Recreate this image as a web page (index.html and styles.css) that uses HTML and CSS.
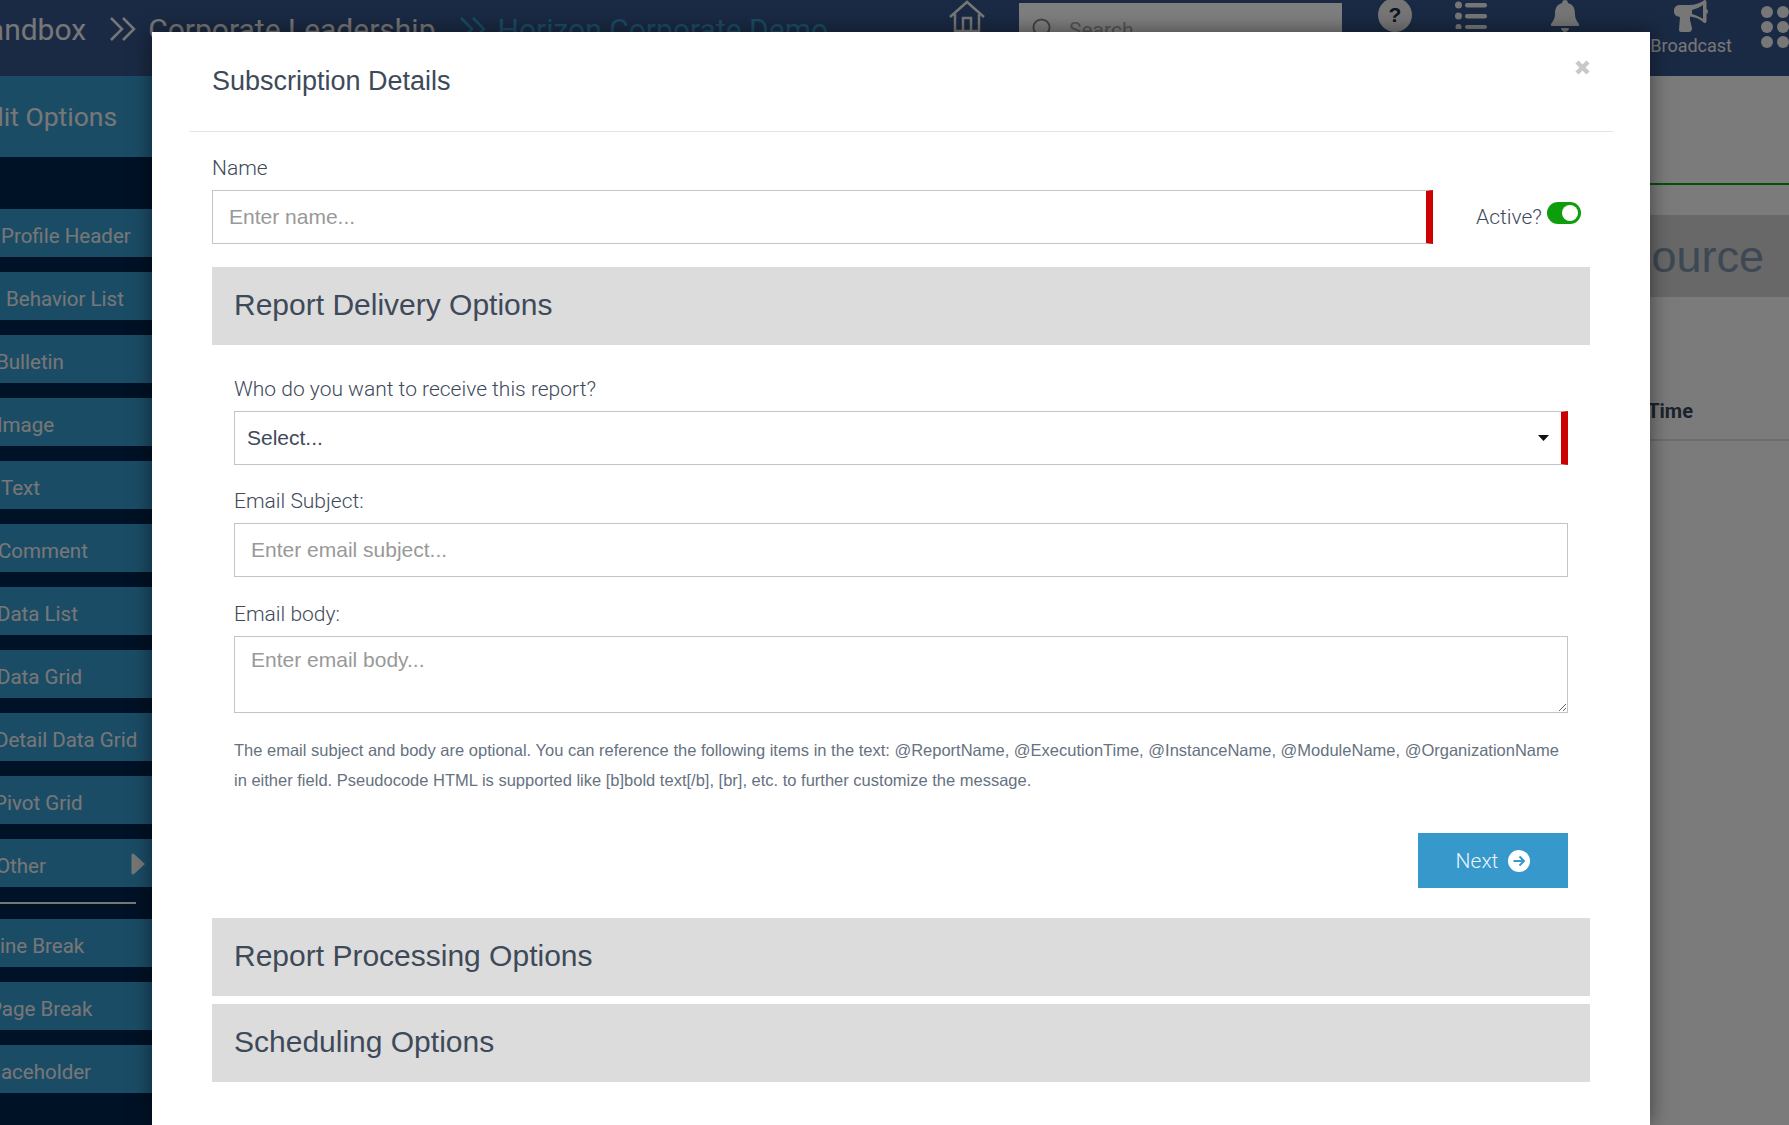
FILE: index.html
```html
<!DOCTYPE html>
<html lang="en">
<head>
<meta charset="utf-8">
<title>Subscription Details</title>
<link rel="stylesheet" href="styles.css">
</head>
<body>
<div class="page">
  <header class="topbar">
    <div class="crumbs">
      <span class="crumb crumb-first">Sandbox</span>
      <svg class="chev" viewBox="0 0 28 28"><path d="M2 3l11 11L2 25M14 3l11 11-11 11"/></svg>
      <span class="crumb">Corporate Leadership</span>
      <svg class="chev chev-blue" viewBox="0 0 28 28"><path d="M2 3l11 11L2 25M14 3l11 11-11 11"/></svg>
      <span class="crumb crumb-blue">Horizon Corporate Demo</span>
    </div>
    <svg class="ic ic-home" viewBox="0 0 38 32"><path d="M2 17L19 2l17 15M7 14v17h24V14M15 31V18h8v13"/></svg>
    <div class="search">
      <svg class="search-ic" viewBox="0 0 20 20"><circle cx="10" cy="10" r="8.500"/></svg>
      <span class="search-text">Search</span>
    </div>
    <svg class="ic ic-help" viewBox="0 0 34 34"><circle cx="17" cy="17" r="17"/><text x="17" y="24" class="help-q">?</text></svg>
    <svg class="ic ic-list" viewBox="0 0 32 28"><circle cx="3.500" cy="4" r="3.500"/><circle cx="3.500" cy="15" r="3.500"/><circle cx="3.500" cy="26" r="3"/><rect x="10" y="2" width="22" height="4.500" rx="2"/><rect x="10" y="13" width="22" height="4.500" rx="2"/><rect x="10" y="24" width="22" height="4" rx="2"/></svg>
    <svg class="ic ic-bell" viewBox="0 0 30 32"><path d="M15 0c2 0 3 1.500 3 3 5 1.500 7 5 7 11 0 5 2 7 4 10 .5 1 0 2-1 2H2c-1 0-1.500-1-1-2 2-3 4-5 4-10 0-6 2-9.500 7-11 0-1.500 1-3 3-3zM11 28h8c0 2-2 4-4 4s-4-2-4-4z"/></svg>
    <div class="broadcast">
      <svg class="ic-mega" viewBox="0 0 34 32"><path d="M31 0c1 0 1.500 1 1.500 2v7c1 .5 1.500 1.500 1.500 2.500S33.500 13.500 32.500 14v7c0 1-.5 2-1.500 2-1 0-1.500-.5-2-1-3-3-8-5-13-5.500V20l2 8c.2 2-1 4-3 4H7c-1 0-2-1-2-2l1-13c-3-.2-6-2-6-5.500V10c0-3 3-5 6-5h9c6 0 11-2 14-4 .5-.5 1-1 2-1zm-2 5c-3 2-7 4-11 5v4c4 1 8 3 11 5z" fill-rule="evenodd"/></svg>
      <span class="broadcast-text">Broadcast</span>
    </div>
    <div class="apps"><i></i><i></i><i></i><i></i><i></i><i></i></div>
  </header>
  <div class="main">
    <aside class="sidebar">
      <div class="side-title">Edit Options</div>
      <div class="side-list">
        <div class="side-item in-a">Profile Header</div>
        <div class="side-item in-b">Behavior List</div>
        <div class="side-item in-c">Bulletin</div>
        <div class="side-item in-d">Image</div>
        <div class="side-item in-a">Text</div>
        <div class="side-item in-e">Comment</div>
        <div class="side-item in-f">Data List</div>
        <div class="side-item in-f">Data Grid</div>
        <div class="side-item in-g">Detail Data Grid</div>
        <div class="side-item in-k">Pivot Grid</div>
        <div class="side-item in-l">Other<svg class="tri" viewBox="0 0 14 22"><path d="M2 2l10 9-10 9z"/></svg></div>
        <div class="side-rule"></div>
        <div class="side-item in-h">Line Break</div>
        <div class="side-item in-i">Page Break</div>
        <div class="side-item in-j">Placeholder</div>
      </div>
    </aside>
    <main class="content">
      <div class="green-line"></div>
      <div class="source-band">Data Source</div>
      <div class="time-head"><span>Execution Time</span></div>
    </main>
  </div>
</div>

<div class="backdrop"></div>

<section class="modal">
  <div class="modal-head">
    <h1 class="modal-title">Subscription Details</h1>
    <svg class="close" viewBox="0 0 15 15"><path d="M2 2l11 11M13 2L2 13"/></svg>
  </div>
  <div class="modal-body">
    <label class="label label-name">Name</label>
    <div class="name-row">
      <input class="field field-req" type="text" placeholder="Enter name...">
      <div class="active-wrap">
        <span class="active-label">Active?</span>
        <span class="toggle"><span class="knob"></span></span>
      </div>
    </div>

    <div class="section-head"><h2>Report Delivery Options</h2></div>
    <div class="section-body">
      <label class="label label-who">Who do you want to receive this report?</label>
      <div class="select">
        <span>Select...</span>
        <svg class="caret" viewBox="0 0 11 6"><path d="M0 0h11L5.500 6z"/></svg>
      </div>
      <label class="label label-subject">Email Subject:</label>
      <input class="field" type="text" placeholder="Enter email subject...">
      <label class="label label-body">Email body:</label>
      <textarea class="area" placeholder="Enter email body..."></textarea>
      <p class="help">The email subject and body are optional. You can reference the following items in the text: @ReportName, @ExecutionTime, @InstanceName, @ModuleName, @OrganizationName in either field. Pseudocode HTML is supported like [b]bold text[/b], [br], etc. to further customize the message.</p>
      <div class="actions">
        <button class="next" type="button">Next
          <svg class="next-ic" viewBox="0 0 22 22"><circle cx="11" cy="11" r="11"/><path d="M5.500 11h10.500M11.500 6.500L16 11l-4.500 4.500"/></svg>
        </button>
      </div>
    </div>
    <div class="section-head"><h2>Report Processing Options</h2></div>
    <div class="section-head section-last"><h2>Scheduling Options</h2></div>
  </div>
</section>
</body>
</html>
```

FILE: styles.css
```css
* { box-sizing: border-box; }
html, body { margin: 0; height: 100%; overflow: hidden; }
body { font-family: Roboto, "Liberation Sans", sans-serif; background: #f6f6f6; color: #3e4a59; }

.page { display: flex; flex-direction: column; height: 1125px; width: 1789px; overflow: hidden; }

/* top bar */
.topbar { flex: 0 0 76px; display: flex; align-items: flex-start; background: #345488; color: #eee; overflow: hidden; position: relative; }
.crumbs { display: flex; align-items: center; height: 58px; margin-left: -30px; flex: 0 0 978px; }
.crumb { font-size: 30px; white-space: nowrap; color: #eee; }
.crumb-blue { color: #3698cc; }
.chev { width: 28px; height: 28px; margin: 0 11px 0 23px; fill: none; stroke: #eee; stroke-width: 2.500; }
.chev-blue { stroke: #3698cc; }
.ic { fill: #eee; flex: none; }
.ic-home { width: 38px; height: 32px; fill: none; stroke: #eee; stroke-width: 2.500; }
.search { width: 332px; height: 60px; margin: 3px 0 0 33px; background: #fff; display: flex; align-items: flex-start; padding: 15px 0 0 13px; }
.search-ic { width: 19px; height: 19px; fill: none; stroke: #888; stroke-width: 2; flex: none; }
.search-text { font-size: 21px; line-height: 24px; color: #aaa; margin-left: 18px; }
.ic-help { width: 34px; height: 34px; margin: -2px 0 0 36px; }
.help-q { font: 700 21px "Liberation Sans", sans-serif; text-anchor: middle; fill: #1a2a44; }
.ic-list { width: 32px; height: 28px; margin: 1px 0 0 43px; }
.ic-bell { width: 30px; height: 32px; margin: 0 0 0 63px; }
.broadcast { display: flex; flex-direction: column; align-items: center; width: 84px; margin-left: 70px; }
.ic-mega { width: 34px; height: 32px; fill: #eee; }
.broadcast-text { font-size: 18px; margin-top: 3px; line-height: 22px; color: #eee; white-space: nowrap; }
.apps { display: grid; grid-template-columns: 12px 12px; column-gap: 4px; row-gap: 3px; margin: 6px 0 0 29px; }
.apps i { width: 12px; height: 12px; border-radius: 50%; background: #eee; }

/* page behind */
.main { flex: 1; display: flex; min-height: 0; }
.sidebar { flex: 0 0 152px; background: #00244c; color: #eee; overflow: hidden; }
.side-title { height: 81px; background: #3698cc; display: flex; align-items: center; font-size: 26.500px; white-space: nowrap; margin-bottom: 52px; padding-left: 0; }
.side-title { text-indent: -26px; }
.side-list { display: flex; flex-direction: column; gap: 15px; }
.side-item { height: 48px; flex: none; background: #3698cc; font-size: 20.500px; line-height: 54px; white-space: nowrap; position: relative; }
.in-a { text-indent: 1px; }
.in-b { text-indent: 6px; }
.in-c { text-indent: -4px; }
.in-d { text-indent: -3px; }
.in-e { text-indent: -2px; }
.in-f { text-indent: -3px; }
.in-g { text-indent: -5px; }
.in-h { text-indent: -11px; }
.in-i { text-indent: -11px; }
.in-j { text-indent: -17px; }
.in-k { text-indent: -6px; }
.in-l { text-indent: -4px; }
.tri { position: absolute; left: 131px; top: 14px; width: 14px; height: 22px; fill: #eee; stroke: #eee; stroke-width: 3; stroke-linejoin: round; }
.side-rule { height: 2px; width: 136px; background: #eee; flex: none; }

.content { flex: 1; position: relative; background: #f6f6f6; overflow: hidden; }
.green-line { height: 2px; margin-top: 107px; background: #0f9d0f; }
.source-band { height: 82px; margin-top: 30px; background: #d0d0d0; font-family: "Liberation Sans", sans-serif; font-size: 45px; line-height: 84px; color: #7c8ea8; white-space: nowrap; display: flex; justify-content: flex-end; padding-right: 25px; }
.time-head { height: 42px; margin-top: 102px; border-bottom: 2px solid #dcdcdc; display: flex; justify-content: flex-end; padding-right: 96px; font-weight: 700; font-size: 20px; color: #36475e; white-space: nowrap; line-height: 24px; }

.backdrop { position: absolute; inset: 0; background: rgba(0, 0, 0, .5); }

/* modal */
.modal { position: absolute; left: 152px; top: 32px; width: 1498px; height: 1093px; background: #fff; padding: 0 37px; box-shadow: 0 0 20px rgba(0, 0, 0, .5); font-family: "Liberation Sans", sans-serif; }
.modal-head { height: 100px; border-bottom: 1px solid #e5e5e5; padding: 0 0 0 23px; position: relative; }
.modal-title { margin: 0; font-size: 27px; font-weight: 400; line-height: 98px; color: #3e4a59; }
.close { position: absolute; right: 23px; top: 28px; width: 15px; height: 15px; fill: none; stroke: #c8c8c8; stroke-width: 4.500; }
.modal-body { padding: 0 23px; }

.label { display: block; font-family: Roboto, sans-serif; font-weight: 300; font-size: 21px; line-height: 26px; color: #3e4a59; }
.label-name { margin-top: 23px; margin-bottom: 9px; }
.name-row { display: flex; align-items: stretch; height: 54px; }
.field { display: block; width: 100%; height: 54px; border: 1px solid #c4c4c4; background: #fff; padding: 0 16px; font: 21px "Liberation Sans", sans-serif; color: #3e4a59; outline: 0; border-radius: 0; }
.name-row .field { flex: 0 0 1221px; width: 1221px; }
.field-req { border-right: 7px solid #c00; }
.field::placeholder, .area::placeholder { color: #999; opacity: 1; }
.active-wrap { display: flex; align-items: flex-start; margin-left: 43px; }
.active-label { font-family: Roboto, sans-serif; font-weight: 300; font-size: 21px; line-height: 26px; margin-top: 14px; color: #3e4a59; white-space: nowrap; }
.toggle { width: 34px; height: 22px; margin: 12px 0 0 5px; border-radius: 11px; background: #0d9d0d; display: block; position: relative; flex: none; }
.knob { position: absolute; right: 3px; top: 3px; width: 16px; height: 16px; border-radius: 50%; background: #fff; }

.section-head { height: 78px; background: #dcdcdc; padding-left: 22px; margin-top: 23px; }
.section-head h2 { margin: 0; font-size: 30px; font-weight: 400; line-height: 76px; color: #3e4a59; }
.section-last { margin-top: 8px; }

.section-body { padding: 31px 22px 7px; }
.select { height: 54px; border: 1px solid #c4c4c4; border-right: 7px solid #c00; display: flex; align-items: center; justify-content: space-between; padding: 0 12px 0 12px; font-size: 21px; color: #3e4a59; margin-top: 9px; }
.caret { width: 11px; height: 6px; fill: #111; }
.label-who { margin-top: 0; }
.label-subject { margin: 23px 0 9px; }
.label-body { margin: 24px 0 9px; }
.area { display: block; width: 100%; height: 77px; border: 1px solid #c4c4c4; padding: 11px 16px; font: 21px "Liberation Sans", sans-serif; color: #3e4a59; outline: 0; border-radius: 0; resize: vertical; }
.help { margin: 22px 0 0; font-size: 16.500px; line-height: 30px; color: #66727f; }
.actions { display: flex; justify-content: flex-end; margin-top: 38px; }
.next { width: 150px; height: 55px; border: 0; background: #3798cc; color: #eaf5fb; font: 300 21px Roboto, sans-serif; display: flex; align-items: center; justify-content: center; gap: 10px; padding: 0; }
.next-ic { width: 22px; height: 22px; fill: #fff; stroke: none; }
.next-ic path { fill: none; stroke: #3798cc; stroke-width: 2; }
```
